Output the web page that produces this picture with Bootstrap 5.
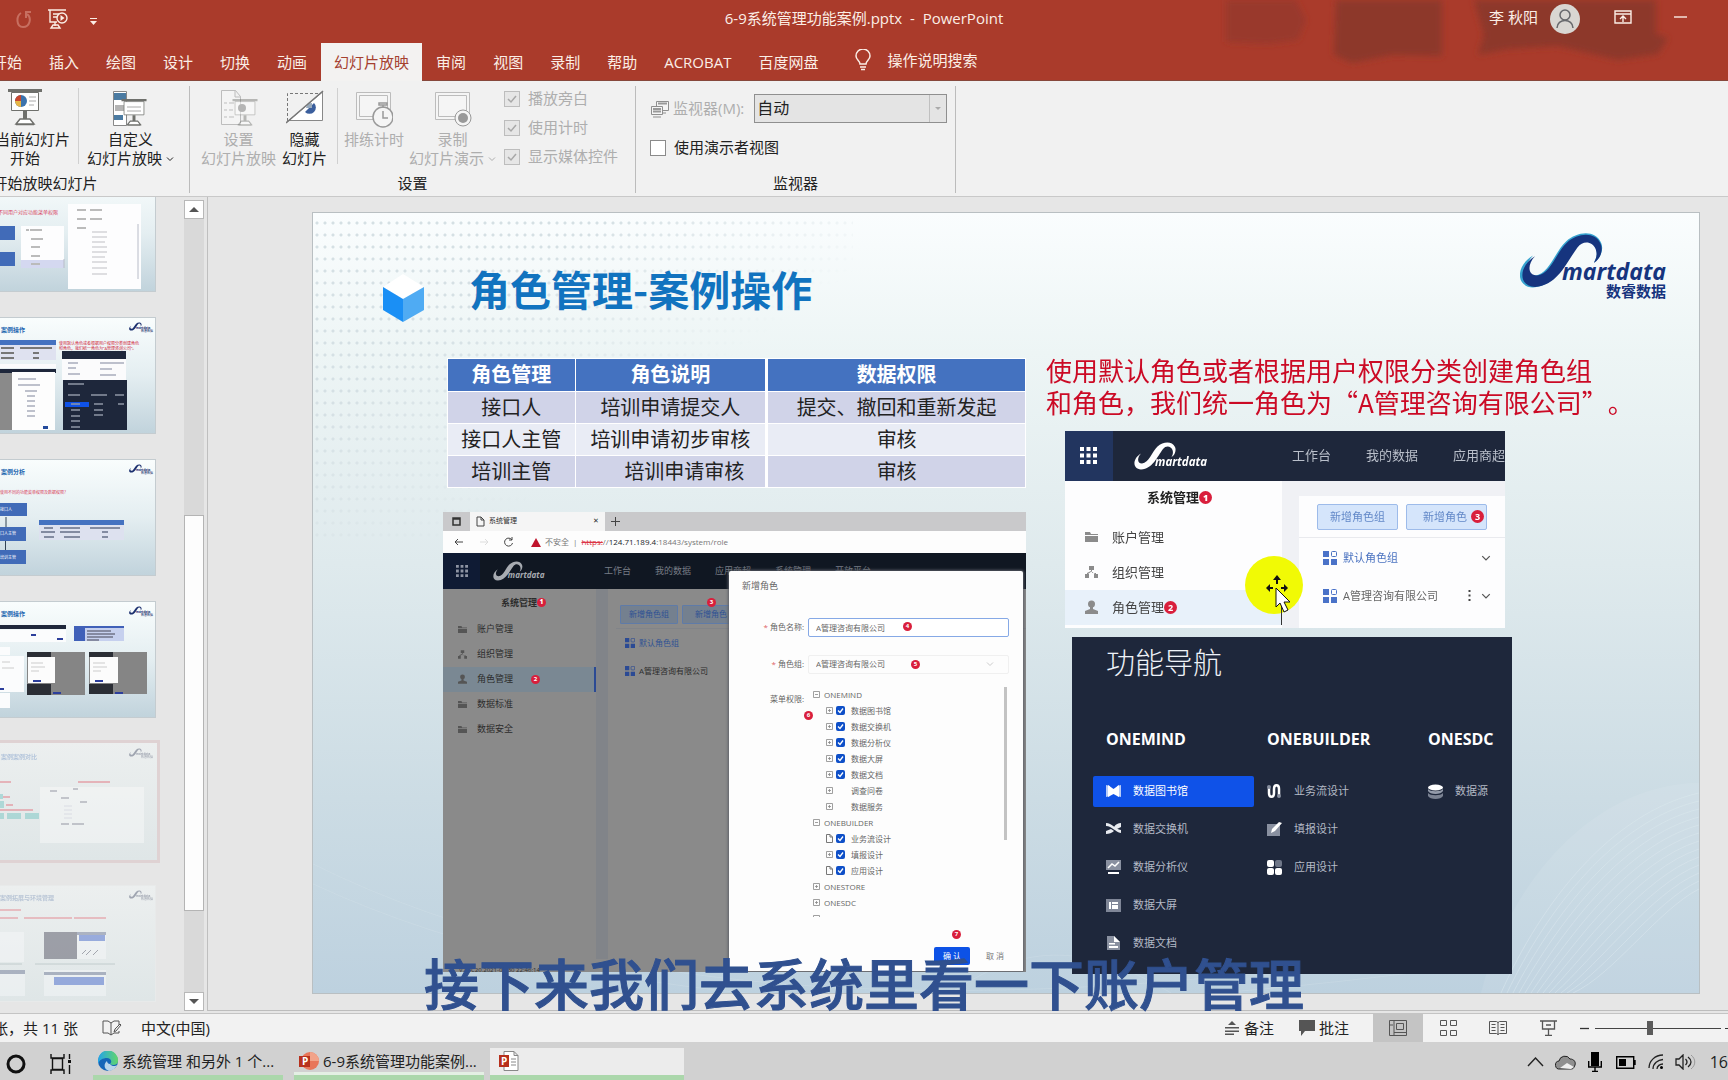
<!DOCTYPE html>
<html lang="zh-CN">
<head>
<meta charset="utf-8">
<meta name="viewport" content="width=device-width, initial-scale=1">
<title>6-9系统管理功能案例.pptx - PowerPoint</title>
<link href="https://cdn.jsdelivr.net/npm/bootstrap@5.3.0/dist/css/bootstrap.min.css" rel="stylesheet">
<style>
:root{--ui:"Open Sans","Noto Sans CJK SC",sans-serif;--red:#aa3b2b;--navy:#1e273b}
body{font-family:var(--ui);font-size:15px;line-height:20px;color:#222;background:#e6e6e6;height:100vh;overflow:hidden;position:relative}
button,input,select{font-family:inherit;font-size:inherit;line-height:inherit;color:inherit}
.plain{background:none;border:0;padding:0}
svg{display:block;flex:none}
ul{list-style:none;margin:0;padding:0}
/* title bar */
.topzone{background:var(--red);color:#fbeee6;position:relative;border-bottom:1px solid #87483c}
.smudge{right:0;top:0;z-index:0}
.titlebar{height:43px;position:relative}
.qat{width:420px}
.account{width:420px}
.tabs{margin-left:-21px;position:relative;height:37px}
.tabs .tab{padding:0 13px;margin-right:1px;height:38px;line-height:34px;white-space:nowrap}
.tabs .tab.on{background:#f3f2f1;color:#a5402f}
.tellme{margin-left:23px}
/* ribbon */
.ribbon{background:#f1f1f1;height:118px;border-bottom:1px solid #c9c9c9;line-height:19px}
.grp{margin:5px 0 3px;border-right:1px solid #bcbcbc;display:flex;flex-direction:column;justify-content:space-between;padding-top:2px}
.grp-start{width:289px;margin-left:-99px;padding-right:15px}
.grp-start .grp-name{margin-right:-15px}
.grp-set{width:446px;padding-left:11px}
.grp-mon{width:320px;padding-left:14px}
.grp-name{text-align:center;line-height:19px}
.grp-set .grp-name{margin-left:-11px}.grp-mon .grp-name{margin-left:-14px}
.rb{display:flex;flex-direction:column;align-items:center;white-space:nowrap;color:#222}
.rb svg{margin-bottom:2px}
.rb:disabled,.dim{color:#aeaeae}
.rsep{width:1px;height:76px;background:#d0d0d0}
.checks{row-gap:10px;padding-top:1px}
.mon-row{padding-top:6px}
.boxy.form-check-input[type=checkbox]{width:16px;height:16px;border:1px solid #8a8a8a;border-radius:0;margin:0;background-color:#fff;flex:none;box-shadow:none}
.boxy.form-check-input[type=checkbox]:disabled{opacity:1;border-color:#bdbdbd;background-color:#e6e6e6;background-size:14px;background-image:url("data:image/svg+xml,%3Csvg xmlns='http://www.w3.org/2000/svg' viewBox='0 0 14 14'%3E%3Cpath d='M3 7l3 3 5-6' fill='none' stroke='%23a8a8a8' stroke-width='1.5'/%3E%3C/svg%3E")}
.checks .form-check-label{opacity:1!important;color:#aeaeae}
.monsel{width:193px;height:29px;border:1px solid #8f8f8f;border-radius:0;padding:0 20px 0 2px;color:#222;line-height:25px;background-color:#e4e4e4;background-position:right 0 center;background-size:17px 27px;background-image:url("data:image/svg+xml,%3Csvg xmlns='http://www.w3.org/2000/svg' viewBox='0 0 17 27'%3E%3Cpath d='M.5 0V27' stroke='%23c0c0c0'/%3E%3Cpath d='M6 12h6l-3 3z' fill='%23aaa'/%3E%3C/svg%3E")}
.monsel:disabled{background-color:#e4e4e4}
/* work area */
.work{min-height:0}
.pane{width:184px;overflow:hidden}
.thumb{width:156px;height:117px;margin-bottom:25px;border:1px solid #c4ccd0;border-left:0;background:linear-gradient(#f9fdfd,#e4eef1 50%,#c1d3dc)}
.thumb:first-child{margin-top:-22px}
.thumb.cur{width:160px;height:123px;margin:-3px 0 22px;border:3px solid #dfd2d3;border-left:0}
.thumb.faded{background:linear-gradient(#ecefef,#dfe6e7)}
.thumb.last{border-color:#e8eaea}
.thumb.faded svg{opacity:.45}
.vbar{width:20px;background:#d9d9d9;margin-top:3px}
.vbar .cap{height:19px;background:#fff;border:1px solid #b8b8b8;display:flex;align-items:center;justify-content:center}
.vbar .thumbbar{background:#fdfdfd;border:1px solid #b4b4b4}
.stage{border-left:1px solid #bfbfbf;margin-left:3px;border-bottom:1px solid #bdbdbd;padding:15px 28px 16px 104px;min-width:0}
.slide{border:1px solid #b9bfc2;height:100%;position:relative;overflow:hidden;background:linear-gradient(#fafdfe 0,#edf5f5 18%,#dfeaed 45%,#ccdce4 75%,#bdd1df 100%)}
.dots{inset:0 auto auto 0;width:540px;height:330px;background:radial-gradient(circle,#d5e0e4 1px,transparent 2px) 0 4px/8px 12px;-webkit-mask-image:linear-gradient(145deg,#000 30%,transparent 62%);mask-image:linear-gradient(145deg,#000 30%,transparent 62%)}
.waves{right:0;bottom:0}
.s-head{height:141px;padding:20px 29px 0 70px;position:relative}
.s-title{font:700 41px/56px "Noto Sans CJK SC",sans-serif;color:#1173bf;margin:27px 0 0 45px}
.s-body{padding-left:130px;position:relative}
.colL{width:583px}
.roles{width:579px;margin:4px 0 24px 4px;font-size:20px;line-height:27px;text-align:center;border-collapse:separate;border-spacing:1px;background:#fff;color:#222}
.roles th{background:#4472c0;color:#fff;padding:2px 0 3px;font-weight:700}
.roles td{background:#d0d3e8;padding:2px 0}
.roles tr.alt td{background:#e9ecf5}
.roles .wide{border-left:2px solid #fff}
.roles .off{padding-left:28px}
.redtext{font:26px/32px "Noto Sans CJK SC",sans-serif;color:#cb0a25;margin:0;white-space:nowrap;text-spacing-trim:space-all}
/* browser shot */
.pin{display:inline-flex;align-items:center;justify-content:center;background:#d91f3c;color:#fff;border-radius:50%;width:9px;height:9px;font-size:6px;line-height:9px;flex:none}
.pin.lg{width:13px;height:13px;font-size:9px}
.bw{position:relative;background:#8a8a8a;font-size:9px;line-height:12px;color:#2c2c2c;height:460px;overflow:hidden}
.bw-tabs{height:19px;background:#c9c9cb;font-size:7px}
.bw-tab{width:135px;background:#f5f5f5;height:19px;padding:0 6px}
.bw-url{height:22px;background:#fdfdfd;font-size:8px;color:#777;padding-left:11px}
.bw-nav{height:36px;background:#101722;color:#777c85}
.bw-nav .cell{width:37px;height:36px;background:#0f1b34}
.bw-side{width:153px}
.bw-side h3{font-size:9px;line-height:12px;font-weight:700;margin:0}
.bw-side li{height:25px;padding-left:15px;gap:10px}
.bw-side li.on{background:#7a8893;border-right:2px solid #2b4a94}
.bw-gut{width:12px;background:#818489}
.bw-btn{height:19px;border:1px solid #5f7ba8;background:#74808f;color:#2f5294;font-size:8px;line-height:12px;border-radius:1px}
.dlg{position:absolute;left:286px;top:59px;width:294px;height:400px;background:#fdfdfd;border-radius:2px 2px 0 0;color:#666;font-size:8px;line-height:16px}
.dlg-edge{box-shadow:0 0 3px 1px #5c5f66}
.dlg .lab{width:75px;text-align:right;white-space:nowrap}
.dlg .lab i{color:#d66;font-style:normal}
.dlg .fld{width:201px;height:19px;border:1px solid #86a9e6;background:#fff;border-radius:2px;padding:0 7px;font-size:8px;color:#666;line-height:16px}
.dlg select.fld{appearance:none;border-color:#f0f0f0;background:#fdfdfd;opacity:1}
.tree{height:230px;overflow:hidden;width:184px}
.tree li{height:16px;display:flex;align-items:center;gap:3px}
.tree .sub{padding-left:13px;gap:2px}
.tree label{margin-left:4px}
.tree-bar{width:3px;height:153px;background:#c3c3c3}
.tick{appearance:none;width:9px;height:9px;border-radius:2px;margin:0;flex:none;background:#fdfdfd}
.tick:checked{background:#0e4fc8 url("data:image/svg+xml,%3Csvg xmlns='http://www.w3.org/2000/svg' viewBox='0 0 9 9'%3E%3Cpath d='M2 4.5l2 2 3-4' fill='none' stroke='%23fff' stroke-width='1.3'/%3E%3C/svg%3E")}
.okbtn{width:36px;height:18px;background:#0d52e6;color:#fff;border:0;border-radius:2px;font-size:8px;line-height:16px}
/* shot A */
.sa{width:440px;margin:13px 0 0 19px;background:#fdfdfe;font-size:13px;line-height:17px;color:#444;position:relative;overflow:hidden}
.sa-nav{height:50px;background:var(--navy);color:#b9bfca;white-space:nowrap}
.sa-nav .cell{width:50px;height:50px;background:#22355f}
.sa-side{width:217px;height:147px}
.sa-side h3{font-size:13px;line-height:17px;font-weight:700;color:#222;margin:8px 0 14px;padding-left:82px}
.sa-side li{height:35px;padding-left:20px;gap:14px}
.sa-side li.on{background:#e8f1fa}
.sa-main{background:#f0f1f5;padding:15px 0 0 17px;font-size:11px;line-height:16px}
.sa-panel{background:#fdfdfe;height:132px}
.sa-btn{width:81px;height:26px;border:1px solid #9dbbea;background:#d5e5fb;color:#6288c8;border-radius:2px;font-size:11px;line-height:16px}
.sa-btn.d-flex{padding-right:2px}
/* shot B */
.sb{width:440px;height:337px;margin:9px 0 0 26px;background:var(--navy);color:#b4bac6;font-size:11px;line-height:16px;padding:3px 0 0 21px;overflow:hidden}
.sb h2{font-weight:300;font-size:29px;line-height:42px;color:#eef2f8;margin:0 0 46px 13px;font-family:"Noto Sans CJK SC",sans-serif}
.sb h4{font-size:16px;line-height:22px;font-weight:700;color:#fff;margin:0 0 26px 13px}
.sb .c{width:161px;flex:none}
.sb li{height:31px;margin-bottom:7px;display:flex;align-items:center;padding-left:13px;gap:12px;border-radius:2px}
.sb li.on{background:#0f52e8;color:#fff}
/* bottom */
.status{height:29px;background:#f2f2f2;border-top:1px solid #c4c4c4;margin-top:2px}
.viewbtn{width:50px;height:28px;display:flex;align-items:center;justify-content:center}
.viewbtn.on{background:#c4c4c4}
.zoomer{appearance:none;width:126px;height:16px;background:linear-gradient(#444,#444) center/100% 1px no-repeat;margin:0}
.zoomer::-webkit-slider-thumb{appearance:none;width:6px;height:14px;background:#5c5c5c;border-radius:0}
.taskbar{height:38px;background:#d1d1d1;padding-top:6px}
.task{height:32px;width:190px;border-bottom:5px solid #abd7ab;padding:0 5px 2px;display:flex;align-items:center;gap:4px;white-space:nowrap}
.task.open{box-shadow:inset 0 -3px #e4efe4}
.task.hov{width:194px;background:#ececec;padding-left:9px}
.caption{left:0;right:0;bottom:69px;text-align:center;font:500 55px/60px "Noto Sans CJK SC",sans-serif;color:#30508f;-webkit-text-stroke:1px #30508f;pointer-events:none}
</style>
</head>
<body class="d-flex flex-column">
<svg width="0" height="0" class="position-absolute" aria-hidden="true">
<defs>
<symbol id="swoosh" viewBox="0 0 86 56"><path d="M14 23C-3 33-4 54 14 55C38 53 46 30 58 14C64 6 74 8 77 16C79 22 77 26 75 30C82 26 85 16 82 10C76-3 58-1 47 9C36 19 30 42 16 43C6 43 6 31 14 23Z"/></symbol>
<symbol id="brand" viewBox="0 0 150 56"><use href="#swoosh" width="86" height="56"/><text x="42" y="47" font-family="Open Sans" font-weight="700" font-style="italic" font-size="23">martdata</text></symbol>
<symbol id="nine" viewBox="0 0 17 17"><path d="M0 0h4v4H0zM6.500 0h4v4h-4zM13 0h4v4h-4zM0 6.500h4v4H0zM6.500 6.500h4v4h-4zM13 6.500h4v4h-4zM0 13h4v4H0zM6.500 13h4v4h-4zM13 13h4v4h-4z"/></symbol>
<symbol id="folder" viewBox="0 0 13 12"><path d="M0 1h5l1 2h7v1H0zM0 5h13v6H0z"/></symbol>
<symbol id="org" viewBox="0 0 13 12"><path d="M4 0h5v4H4zM0 8h4v4H0zM9 8h4v4H9zM6 4h1v3h4v1h-1L6.500 5.500 3 8H2V7l4-2z"/></symbol>
<symbol id="person" viewBox="0 0 13 14"><circle cx="6.500" cy="4" r="3.500"/><path d="M5 7h3v2l5 2v3H0v-3l5-2z"/></symbol>
<symbol id="tiles" viewBox="0 0 14 14"><path d="M0 0h6v6H0zM0 8h6v6H0zM8 8h6v6H8z"/><rect x="8.500" y=".5" width="5" height="5" rx="1" fill="none" stroke="currentColor"/></symbol>
<symbol id="plus" viewBox="0 0 9 9"><path d="M1.500 1.500h6v6h-6zM4.500 3v3M3 4.500h3" fill="none" stroke="#888" stroke-width=".8"/></symbol>
<symbol id="minus" viewBox="0 0 9 9"><path d="M1.500 1.500h6v6h-6zM3 4.500h3" fill="none" stroke="#888" stroke-width=".8"/></symbol>
<symbol id="page" viewBox="0 0 9 9"><path d="M1.500.5h3.500l2.500 2.500v5.500h-6zM5 .5V3h2.500" fill="none" stroke="#777"/></symbol>
<symbol id="down" viewBox="0 0 8 6"><path d="M1 1.500l3 3 3-3" fill="none" stroke="currentColor"/></symbol>
<symbol id="board" viewBox="0 0 34 38"><path d="M0 0h34v3H0zM15 22h4v8h-4z" fill="#6f706c"/><path d="M3.500 3.500h27v18h-27z" fill="#fff" stroke="#6f706c"/><path d="M12 30h10l4 5H8zM8 35.500h18" fill="#fff" stroke="#6f706c" stroke-width="1.500"/></symbol>
</defs>
</svg>

<header class="topzone">
  <svg class="smudge position-absolute" width="560" height="80" viewBox="1168 0 560 80"><defs><filter id="soft"><feGaussianBlur stdDeviation="3"/></filter></defs><g fill="#8d372b" filter="url(#soft)"><path d="M1226 0h70l10 20-8 20-30 4-42-2z" opacity=".6"/><path d="M1336 0h106v56l-50-1-40 8-18-8z"/><path d="M1474 0h182v34l12 4-10 16-40 6-60-14-50 3-30 6 6-20z"/></g></svg>
  <div class="titlebar d-flex align-items-start">
    <div class="qat d-flex align-items-center ps-3 pt-2">
      <button class="plain" aria-label="撤消"><svg width="16" height="20" viewBox="0 0 16 20"><path d="M5 4C0 7 0 18 7 18s9-9 4-13M15 3h-5v6" fill="none" stroke="#c76f60" stroke-width="2"/></svg></button>
      <button class="plain ms-3" aria-label="从头开始"><svg width="20" height="22" viewBox="0 0 20 22"><g fill="none" stroke="#fbeee6" stroke-width="1.400"><path d="M0 2h18M2 2v12h7M5 6h6M5 9h4M7 14v4M3 20h9l-2-3H5z"/><circle cx="14" cy="10" r="5"/></g><path d="M12.500 7l4 3-4 3z" fill="#fbeee6"/></svg></button>
      <button class="plain ms-3" aria-label="自定义快速访问工具栏"><svg width="20" height="20" viewBox="0 0 20 20"><path d="M6 9h7v1H6zM6 12h7l-3.500 4z" fill="#fbeee6"/></svg></button>
    </div>
    <div class="flex-grow-1 text-center pt-2" style="white-space:pre">6-9系统管理功能案例.pptx  -  PowerPoint</div>
    <div class="account d-flex align-items-center">
      <span style="margin-left:181px">李 秋阳</span>
      <svg class="mt-1" style="margin-left:12px" width="30" height="30" viewBox="0 0 30 30"><circle cx="15" cy="15" r="15" fill="#d9d6d2"/><g fill="none" stroke="#67686c" stroke-width="1.500"><circle cx="15" cy="11" r="5"/><path d="M7 24c0-10 16-10 16 0"/></g></svg>
      <button class="plain" style="margin-left:34px" aria-label="功能区显示选项"><svg width="18" height="14" viewBox="0 0 18 14"><path d="M1 1h16v12H1zM1 4h16M9 12V6M6 9l3-3 3 3" fill="none" stroke="#fbeee6" stroke-width="1.400"/></svg></button>
      <button class="plain" style="margin-left:42px" aria-label="最小化"><svg width="13" height="14" viewBox="0 0 13 14"><path d="M0 7h13" stroke="#fbeee6" stroke-width="1.400"/></svg></button>
    </div>
  </div>
  <nav class="tabs d-flex">
    <button class="plain tab">开始</button><button class="plain tab">插入</button><button class="plain tab">绘图</button><button class="plain tab">设计</button><button class="plain tab">切换</button><button class="plain tab">动画</button><button class="plain tab on">幻灯片放映</button><button class="plain tab">审阅</button><button class="plain tab">视图</button><button class="plain tab">录制</button><button class="plain tab">帮助</button><button class="plain tab">ACROBAT</button><button class="plain tab">百度网盘</button>
    <button class="plain tellme d-flex align-items-center gap-3 pb-1"><svg width="16" height="22" viewBox="0 0 16 22"><path d="M5 15c0-3-4-4-4-8a7 7 0 0114 0c0 4-4 5-4 8zM5 18h6M6 20.500h4" fill="none" stroke="#fbeee6" stroke-width="1.500"/></svg>操作说明搜索</button>
  </nav>
</header>

<section class="ribbon d-flex">
  <div class="grp grp-start">
    <div class="d-flex justify-content-end">
      <button class="plain rb"><svg width="34" height="40" viewBox="0 0 34 40"><use href="#board" y="1" width="34" height="38"/><circle cx="13" cy="13" r="6" fill="#3b73ad"/><path d="M13 13V7a6 6 0 00-6 6z" fill="#c8472e"/><path d="M7 13a6 6 0 006 6v-6z" fill="#e7b646"/><path d="M21 9h7M21 13h7M21 17h5" stroke="#aaa"/></svg><span>从当前幻灯片</span><span>开始</span></button>
      <i class="rsep ms-2 me-2"></i>
      <button class="plain rb"><svg width="36" height="40" viewBox="0 0 36 40"><path d="M1.500 3.500h13v34h-13z" fill="#fff" stroke="#888"/><path d="M2 5h12v7H2zM2 27h9v5H2z" fill="#4b7ba2"/><path d="M3 17h9v6H3z" fill="#b4b4b4"/><use href="#board" x="9" y="11" width="26" height="28"/><path d="M15 19h14M15 23h14" stroke="#aaa"/></svg><span>自定义</span><span class="d-flex align-items-center">幻灯片放映<svg class="m-0 ms-1" width="8" height="6"><use href="#down"/></svg></span></button>
    </div>
    <div class="grp-name">开始放映幻灯片</div>
  </div>
  <div class="grp grp-set">
    <div class="d-flex align-items-start">
      <button class="plain rb" disabled><svg width="38" height="40" viewBox="0 0 38 40"><path d="M1.500 2.500h14l5 6v28h-19zM15 2v7h6M4 15h3M4 22h3M4 29h3M9 15h5M9 22h4M9 29h5" fill="#f4f4f4" stroke="#bdbdbd"/><g opacity=".45"><use href="#board" x="12" y="11" width="26" height="28"/></g><circle cx="22" cy="20" r="4" fill="#b5b5b5"/></svg><span>设置</span><span>幻灯片放映</span></button>
      <button class="plain rb" style="margin-left:6px"><svg width="38" height="40" viewBox="0 0 38 40"><path d="M1.500 33V5.500h35" fill="none" stroke="#777" stroke-dasharray="3 2"/><path d="M1 34L36.500 4v28.500H2z" fill="#fff" stroke="#888"/><path d="M19 24l9-9a6 6 0 11-9 9z" fill="#3b5f9d"/><path d="M20 20a6 6 0 016-5v5z" fill="#9ab"/><path d="M0 35L37 3" stroke="#777" stroke-width="1.500"/></svg><span>隐藏</span><span>幻灯片</span></button>
      <i class="rsep" style="margin:0 6px 0 10px"></i>
      <button class="plain rb" disabled><svg width="38" height="40" viewBox="0 0 38 40"><path d="M1.500 4.500h34v27h-34zM4.500 7.500h28v21h-28z" fill="#f5f5f5" stroke="#bcbcbc"/><circle cx="28" cy="29" r="10" fill="#f5f5f5" stroke="#999" stroke-width="1.500"/><path d="M28 23v7h5M24 15h8v2h-8zM28 17v3" fill="none" stroke="#999" stroke-width="1.500"/></svg><span>排练计时</span></button>
      <button class="plain rb" style="margin-left:5px" disabled><svg width="38" height="40" viewBox="0 0 38 40"><path d="M1.500 4.500h34v27h-34zM4.500 7.500h28v21h-28z" fill="#f5f5f5" stroke="#bcbcbc"/><circle cx="29" cy="30" r="8" fill="#f5f5f5" stroke="#999"/><circle cx="29" cy="30" r="5" fill="#999"/></svg><span>录制</span><span class="d-flex align-items-center">幻灯片演示<svg class="m-0 ms-1" width="8" height="6"><use href="#down"/></svg></span></button>
      <div class="checks d-flex flex-column ms-2">
        <div class="d-flex align-items-center gap-2"><input class="form-check-input boxy" type="checkbox" id="c1" checked disabled><label class="form-check-label" for="c1">播放旁白</label></div>
        <div class="d-flex align-items-center gap-2"><input class="form-check-input boxy" type="checkbox" id="c2" checked disabled><label class="form-check-label" for="c2">使用计时</label></div>
        <div class="d-flex align-items-center gap-2"><input class="form-check-input boxy" type="checkbox" id="c3" checked disabled><label class="form-check-label" for="c3">显示媒体控件</label></div>
      </div>
    </div>
    <div class="grp-name">设置</div>
  </div>
  <div class="grp grp-mon">
    <div class="mon-row">
      <div class="d-flex align-items-center"><svg width="19" height="18" viewBox="0 0 19 18"><g fill="#f5f5f5" stroke="#8f8f8f"><path d="M6.500 1.500h12v9h-12zM9 13h7"/><path d="M1.500 6.500h11v8h-11zM3 17h8"/></g><path d="M8 3.500h9M3 9h8M3 11.500h8" stroke="#999" stroke-width="2"/></svg><label for="mon" class="dim ms-1 text-nowrap">监视器(M):</label><select id="mon" class="form-select monsel" style="margin-left:10px" disabled><option>自动</option></select></div>
      <div class="d-flex align-items-center gap-2" style="margin-top:15px"><input class="form-check-input boxy" type="checkbox" id="pv"><label for="pv">使用演示者视图</label></div>
    </div>
    <div class="grp-name">监视器</div>
  </div>
</section>

<main class="work flex-grow-1 d-flex">
  <aside class="pane">
    <div class="thumb"><svg width="155" height="115" viewBox="0 0 155 115"><text x="-2" y="38" font-size="5" fill="#d8415c">不同用户对应功能菜单权限</text><path d="M0 50h15v14H0zM0 76h15v14H0z" fill="#416bb8"/><path d="M21 50h43v42H21zM68 28h73v85H68z" fill="#fdfdfe"/><path d="M21 84h43v8H21z" fill="#d4d8f0"/><path d="M26 54h3M30 54h12M31 63h12M31 71h9M31 80h9M31 88h9M77 34h9M90 34h12M77 43h9M90 43h12M77 52h9" stroke="#bbb" stroke-width="2"/><path d="M92 56h15M92 61h15M92 66h13M92 71h15M92 76h15M92 81h13M92 86h15M92 92h15M92 98h15" stroke="#d4d4d8" stroke-width="1.500"/><path d="M138 48v55M64 83v9" stroke="#b8bcc8"/></svg></div>
    <div class="thumb"><svg width="155" height="115" viewBox="0 0 155 115"><text x="1" y="14" font-size="6" font-weight="700" fill="#1e67b0">案例操作</text><g fill="#1b2f6e"><use href="#swoosh" x="129" y="4" width="13" height="9"/><text x="136" y="11" font-size="3" font-weight="700">martdata</text><text x="141" y="14" font-size="3">数睿数据</text></g><path d="M0 22h56v5H0z" fill="#4472c0"/><path d="M0 27h56v15H0z" fill="#dfe2f0"/><path d="M1 30h13M20 30h32M1 35h13M33 35h6M1 40h13M33 40h6" stroke="#777" stroke-width="2"/><text x="59" y="27" font-size="4" fill="#d01c38">使用默认角色或者根据用户权限分类创建角色</text><text x="59" y="32" font-size="4" fill="#d01c38">和角色，我们统一角色为“A管理咨询公司”。</text><path d="M0 46h56v4H0zM62 33h64v29H62z" fill="#fbfbfc"/><path d="M0 51h56v4H0zM62 33h64v8H62z" fill="#1e273b"/><path d="M0 55h12v57H0z" fill="#8a8a8a"/><path d="M12 54h43v58H12z" fill="#fdfdfd"/><path d="M63 62h64v50H63z" fill="#1e273b"/><path d="M65 84h24v5H65z" fill="#0f52e8"/><path d="M68 66h16M68 77h12M91 77h16M115 77h9M71 86h9M71 92h9M71 98h9M71 103h9M71 109h9M94 86h9M94 92h9M94 97h9M118 86h6" stroke="#8f96a5" stroke-width="1.500"/><path d="M68 45h10M68 50h8M68 56h12M100 45h24M100 51h12M100 57h16M18 61h18M18 67h22M25 73h12M27 78h8M27 83h8M27 88h8M27 93h8M27 98h8" stroke="#a9adbc" stroke-width="1.500"/><path d="M43 108h5v3h-5z" fill="#244b9c"/></svg></div>
    <div class="thumb"><svg width="155" height="115" viewBox="0 0 155 115"><text x="1" y="14" font-size="6" font-weight="700" fill="#1e67b0">案例分析</text><g fill="#1b2f6e"><use href="#swoosh" x="129" y="4" width="13" height="9"/><text x="136" y="11" font-size="3" font-weight="700">martdata</text><text x="141" y="14" font-size="3">数睿数据</text></g><text x="0" y="34" font-size="4" fill="#d8415c">使用不同的功能菜单权限及数据权限？</text><path d="M0 43h27v13H0zM0 67h26v14H0zM0 90h26v14H0z" fill="#416bb8"/><g font-size="4" fill="#fff"><text x="0" y="51">接口人</text><text x="0" y="75">口人主管</text><text x="0" y="99">培训主管</text></g><path d="M6 57v10M5.500 81v9" stroke="#345" /><path d="M39 60h85v5H39z" fill="#4472c0"/><path d="M39 65h85v15H39z" fill="#dde1ef"/><path d="M44 68h9M60 68h20M90 68h30M41 72h14M60 72h20M102 72h6M44 77h10M64 77h16M102 77h6" stroke="#666f88" stroke-width="1.500"/></svg></div>
    <div class="thumb"><svg width="155" height="115" viewBox="0 0 155 115"><text x="1" y="14" font-size="6" font-weight="700" fill="#1e67b0">案例操作</text><g fill="#1b2f6e"><use href="#swoosh" x="129" y="4" width="13" height="9"/><text x="136" y="11" font-size="3" font-weight="700">martdata</text><text x="141" y="14" font-size="3">数睿数据</text></g><path d="M0 23h66v4H0z" fill="#1e273b"/><path d="M0 28h66v12H0zM0 45h10v8H0zM0 54h24v36H0zM0 91h10v15H0z" fill="#fbfcfd"/><path d="M74 24h50v15H74z" fill="#c6d0ee"/><path d="M74 24h50v2H74zM74 26h11v13H74z" fill="#4060b8"/><path d="M87 29h24M87 32h28M87 35h26M87 38h12" stroke="#445"/><path d="M27 50h58v43H27zM89 50h58v42H89z" fill="#858585"/><path d="M27 50h24v5H27zM27 82h24v11H27zM89 50h24v5H89zM89 82h24v10H89z" fill="#2b2e35"/><path d="M28 55h27v26H28zM90 55h28v26H90z" fill="#fcfcfc"/><path d="M31 61h12M31 65h14M31 69h8M93 61h12M93 65h14M93 69h8M2 60h8M2 66h12" stroke="#ccc"/><path d="M33 78h8v2h-8zM95 78h8v2h-8zM53 90h8v2h-8zM115 90h8v2h-8zM31 32h5v2h-5zM57 36h6v2h-6zM0 86h4v2H0z" fill="#2d3f9c"/></svg></div>
    <div class="thumb cur faded"><svg width="157" height="117" viewBox="0 -1 157 117"><text x="1" y="15" font-size="6" font-weight="700" fill="#6f92c4">案例案例对比</text><g fill="#444c66"><use href="#swoosh" x="129" y="4" width="13" height="9"/><text x="136" y="11" font-size="3" font-weight="700">martdata</text><text x="141" y="14" font-size="3">数睿数据</text></g><path d="M0 38h11M78 38h32M0 53h10M0 66h33M6 61h7" stroke="#e2707c" stroke-width="2"/><path d="M0 50h3v5H0zM0 57h4v7H0zM0 69h4v6H0zM7 69h14v6H7zM25 69h14v6H25z" fill="#6cc3c0"/><path d="M40 43h104v56H40z" fill="#fbfbfb"/><path d="M50 47h7M73 45h5M61 54h8M80 58h7M61 80h8M72 80h12" stroke="#778" stroke-width="1.500"/><path d="M64 62h8M64 66h8M64 70h8M64 74h8" stroke="#ccd"/></svg></div>
    <div class="thumb faded last"><svg width="155" height="115" viewBox="0 0 155 115"><text x="0" y="14" font-size="6" font-weight="700" fill="#7d94b8">案例拓展与环境管理</text><g fill="#444c66"><use href="#swoosh" x="129" y="4" width="13" height="9"/><text x="136" y="11" font-size="3" font-weight="700">martdata</text><text x="141" y="14" font-size="3">数睿数据</text></g><path d="M0 24h21M0 32h18M24 32h48M74 32h32" stroke="#e2606c" stroke-width="1.500"/><path d="M0 46h24v30H0zM77 46h29v27H77zM44 84h62v26H44zM0 84h25v26H0z" fill="#f8f9fb"/><path d="M44 46h33v27H44z" fill="#445"/><path d="M77 46h29v3H77zM44 86h62v3H44zM0 84h25v4H0z" fill="#667090"/><path d="M79 49h26v6H79zM54 91h50v8H54z" fill="#3b5fcc"/><path d="M0 78h22M35 78h80" stroke="#9aa" /><path d="M82 68l4-4M86 69l5-5M93 69l5-5" stroke="#556"/></svg></div>
  </aside>
  <div class="vbar d-flex flex-column">
    <div class="cap"><svg width="10" height="6" viewBox="0 0 10 6"><path d="M0 6l5-5 5 5z" fill="#555"/></svg></div>
    <div style="flex:298 0 0"></div><div class="thumbbar" style="flex:396 0 0"></div><div style="flex:82 0 0"></div>
    <div class="cap"><svg width="10" height="6" viewBox="0 0 10 6"><path d="M0 0h10L5 5z" fill="#555"/></svg></div>
  </div>
  <div class="stage flex-grow-1">
    <article class="slide">
      <div class="dots position-absolute"></div>
      <svg class="waves position-absolute" width="1388" height="240" viewBox="0 0 1388 240"><g fill="none" stroke="#dbe8ee" opacity=".5"><path d="M1190 240C1230 150 1300 60 1388 40M1196 240C1236 156 1304 68 1388 48M1202 240C1242 162 1308 76 1388 56M1208 240C1248 168 1312 84 1388 64M1214 240C1254 174 1316 92 1388 72M1220 240C1260 180 1320 100 1388 80M1226 240C1266 186 1324 108 1388 88M1232 240C1272 192 1328 116 1388 96M1238 240C1278 198 1332 124 1388 104M1244 240C1284 204 1336 132 1388 112M1250 240C1290 210 1340 140 1388 120M1256 240C1296 216 1344 148 1388 128M1262 240C1302 222 1348 156 1388 136"/><path d="M0 110C300 260 700 260 1100 200M0 130C300 270 700 270 1100 220M640 240C700 200 760 180 860 240" opacity=".5"/></g><path d="M1170 240C1200 120 1290 30 1388 30V240z" fill="#fff" opacity=".08"/></svg>
      <div class="s-head d-flex align-items-start">
        <svg style="margin-top:41px" width="41" height="48" viewBox="0 0 41 48"><path d="M20 0l21 13-21 12L0 13z" fill="#fff"/><path d="M0 13l20 12v23L0 36z" fill="#1a8ff5"/><path d="M41 13L20 25v23l21-12z" fill="#4fabf3"/></svg>
        <h1 class="s-title">角色管理-案例操作</h1>
        <svg class="ms-auto" width="150" height="68" viewBox="0 0 150 68"><g fill="#36a3cf"><use href="#swoosh" x="-1" y="-1" width="86" height="57"/></g><g fill="#16347e"><use href="#swoosh" x="1" y="1" width="84" height="54"/><text x="42" y="47" font-family="Open Sans" font-weight="700" font-style="italic" font-size="23">martdata</text><text x="86" y="64" font-family="Noto Sans CJK SC" font-weight="700" font-size="15">数睿数据</text></g></svg>
      </div>
      <div class="s-body d-flex">
        <div class="colL">
          <table class="roles">
            <colgroup><col style="width:22%"><col style="width:33%"><col></colgroup>
            <thead><tr><th>角色管理</th><th>角色说明</th><th class="wide">数据权限</th></tr></thead>
            <tbody><tr><td>接口人</td><td>培训申请提交人</td><td class="wide">提交、撤回和重新发起</td></tr><tr class="alt"><td>接口人主管</td><td>培训申请初步审核</td><td class="wide">审核</td></tr><tr><td>培训主管</td><td class="off">培训申请审核</td><td class="wide">审核</td></tr></tbody>
          </table>
          <section class="bw">
            <div class="bw-tabs d-flex align-items-center"><svg class="mx-2" width="11" height="11" viewBox="0 0 11 11"><path d="M2 2h7v7H2zM2 3h7" fill="none" stroke="#333" stroke-width="1.500"/></svg><div class="bw-tab d-flex align-items-center gap-1"><svg width="9" height="11" viewBox="0 0 9 11"><path d="M1 1h4l3 3v6H1zM5 1v3h3" fill="none" stroke="#444"/></svg><span>系统管理</span><button class="plain ms-auto" aria-label="关闭">✕</button></div><button class="plain" style="margin-left:6px" aria-label="新标签"><svg width="9" height="9" viewBox="0 0 9 9"><path d="M4.500 0v9M0 4.500h9" stroke="#444"/></svg></button></div>
            <div class="bw-url d-flex align-items-center"><svg width="91" height="12" viewBox="0 0 91 12"><g fill="none" stroke="#444"><path d="M9 6H1M4 3L1 6l3 3"/><path d="M26 6h8M31 3l3 3-3 3" stroke="#ddd"/><path d="M58 4a4 4 0 10.500 3M58 1v3h-3"/></g><path d="M82 2l5 9H77z" fill="#c0142c"/></svg><span>不安全</span><span class="mx-1">|</span><span><s class="text-danger">https:</s>//<span class="text-dark">124.71.189.4</span>:18443/system/role</span></div>
            <div class="bw-nav d-flex align-items-center text-nowrap"><div class="cell d-flex align-items-center justify-content-center"><svg width="12" height="12" fill="#8d94a3"><use href="#nine"/></svg></div><svg style="margin-left:13px" width="53" height="20" fill="#a7abb1"><use href="#brand"/></svg><span style="margin-left:58px">工作台</span><span class="ms-4">我的数据</span><span class="ms-4">应用商超</span><span class="ms-4">系统管理</span><span class="ms-4">开放平台</span></div>
            <div class="d-flex" style="height:370px">
              <div class="bw-side"><h3 class="d-flex align-items-center pt-2 pb-3"><span style="margin-left:58px">系统管理</span><b class="pin">1</b></h3>
                <ul><li class="d-flex align-items-center" style="margin-top:-8px"><svg width="9" height="9" fill="#555"><use href="#folder"/></svg>账户管理</li><li class="d-flex align-items-center"><svg width="9" height="9" fill="#555"><use href="#org"/></svg>组织管理</li><li class="d-flex align-items-center on"><svg width="9" height="10" fill="#555"><use href="#person"/></svg>角色管理<b class="pin ms-2">2</b></li><li class="d-flex align-items-center"><svg width="9" height="9" fill="#555"><use href="#folder"/></svg>数据标准</li><li class="d-flex align-items-center"><svg width="9" height="9" fill="#555"><use href="#folder"/></svg>数据安全</li></ul></div>
              <div class="bw-gut"></div>
              <div class="flex-grow-1 ps-2 pt-3"><div class="d-flex gap-1 ps-1 pb-1" style="border-bottom:1px solid #818489"><button class="bw-btn" style="width:58px">新增角色组</button><button class="bw-btn" style="width:58px">新增角色</button></div>
                <div class="d-flex align-items-center gap-1 mt-2" style="padding-left:9px;color:#2f5294;font-size:8px"><svg width="10" height="10" fill="#2b4a94" color="#2b4a94"><use href="#tiles"/></svg>默认角色组</div>
                <div class="d-flex align-items-center gap-1 mt-3" style="padding-left:9px;font-size:8px"><svg width="10" height="10" fill="#2b4a94" color="#2b4a94"><use href="#tiles"/></svg>A管理咨询有限公司</div></div>
            </div>
            <b class="pin position-absolute" style="left:264px;top:86px">3</b>
            <div class="position-absolute" style="left:16px;bottom:-4px;font-size:6px">V.83C20.2021-09-30 22:46:14</div>
            <form class="dlg dlg-edge">
              <div style="padding:7px 13px 0;font-size:9px">新增角色</div>
              <div class="d-flex align-items-center mt-4 gap-1"><label class="lab" for="rn"><i>*</i> 角色名称:</label><input id="rn" class="fld" value="A管理咨询有限公司"></div>
              <div class="d-flex align-items-center gap-1" style="margin-top:18px"><label class="lab" for="rg"><i>*</i> 角色组:</label><select id="rg" class="fld"><option>A管理咨询有限公司</option></select></div>
              <div class="d-flex gap-2" style="margin-top:13px"><span class="lab pt-1">菜单权限:</span>
                <ul class="tree">
                  <li><svg width="9" height="9"><use href="#minus"/></svg><span>ONEMIND</span></li>
                  <li class="sub"><svg width="9" height="9"><use href="#plus"/></svg><input class="tick" type="checkbox" id="t1" checked><label for="t1">数据图书馆</label></li>
                  <li class="sub"><svg width="9" height="9"><use href="#plus"/></svg><input class="tick" type="checkbox" id="t2" checked><label for="t2">数据交换机</label></li>
                  <li class="sub"><svg width="9" height="9"><use href="#plus"/></svg><input class="tick" type="checkbox" id="t3" checked><label for="t3">数据分析仪</label></li>
                  <li class="sub"><svg width="9" height="9"><use href="#plus"/></svg><input class="tick" type="checkbox" id="t4" checked><label for="t4">数据大屏</label></li>
                  <li class="sub"><svg width="9" height="9"><use href="#plus"/></svg><input class="tick" type="checkbox" id="t5" checked><label for="t5">数据文档</label></li>
                  <li class="sub"><svg width="9" height="9"><use href="#plus"/></svg><input class="tick" type="checkbox" id="t6"><label for="t6">调查问卷</label></li>
                  <li class="sub"><svg width="9" height="9"><use href="#plus"/></svg><input class="tick" type="checkbox" id="t7"><label for="t7">数据服务</label></li>
                  <li><svg width="9" height="9"><use href="#minus"/></svg><span>ONEBUILDER</span></li>
                  <li class="sub"><svg width="9" height="9"><use href="#page"/></svg><input class="tick" type="checkbox" id="t8" checked><label for="t8">业务流设计</label></li>
                  <li class="sub"><svg width="9" height="9"><use href="#plus"/></svg><input class="tick" type="checkbox" id="t9" checked><label for="t9">填报设计</label></li>
                  <li class="sub"><svg width="9" height="9"><use href="#page"/></svg><input class="tick" type="checkbox" id="t10" checked><label for="t10">应用设计</label></li>
                  <li><svg width="9" height="9"><use href="#plus"/></svg><span>ONESTORE</span></li>
                  <li><svg width="9" height="9"><use href="#plus"/></svg><span>ONESDC</span></li>
                  <li><svg width="9" height="9"><use href="#plus"/></svg><span>ABILITY</span></li>
                </ul>
                <div class="tree-bar"></div></div>
              <div class="d-flex justify-content-end align-items-center gap-3" style="margin-top:30px;padding-right:15px"><button type="button" class="okbtn">确 认</button><button type="button" class="plain me-1" style="color:#777">取 消</button></div>
              <b class="pin position-absolute" style="left:174px;top:51px">4</b><b class="pin position-absolute" style="left:182px;top:89px">5</b><b class="pin position-absolute" style="left:75px;top:140px">6</b><b class="pin position-absolute" style="left:223px;top:359px">7</b>
              <svg class="position-absolute" style="left:257px;top:90px;color:#ccc" width="8" height="6"><use href="#down"/></svg>
            </form>
          </section>
        </div>
        <div class="ms-3 ps-1">
          <p class="redtext">使用默认角色或者根据用户权限分类创建角色组<br>和角色，我们统一角色为“A管理咨询有限公司”。</p>
          <section class="sa">
            <div class="sa-nav d-flex align-items-center"><div class="cell d-flex align-items-center justify-content-center"><svg width="17" height="17" fill="#fff"><use href="#nine"/></svg></div><svg style="margin-left:21px" width="75" height="28" fill="#fff"><use href="#brand"/></svg><span style="margin-left:83px">工作台</span><span style="margin-left:35px">我的数据</span><span style="margin-left:35px">应用商超</span></div>
            <div class="d-flex">
              <div class="sa-side"><h3 class="d-flex align-items-center">系统管理<b class="pin lg">1</b></h3>
                <ul><li class="d-flex align-items-center"><svg width="13" height="12" fill="#8b8b8b"><use href="#folder"/></svg>账户管理</li><li class="d-flex align-items-center"><svg width="13" height="12" fill="#8b8b8b"><use href="#org"/></svg>组织管理</li><li class="d-flex align-items-center on"><svg width="13" height="14" fill="#8b8b8b"><use href="#person"/></svg><span class="d-flex align-items-center">角色管理<b class="pin lg">2</b></span></li></ul></div>
              <div class="sa-main flex-grow-1"><div class="sa-panel">
                <div class="d-flex gap-2 pt-2" style="padding:0 18px 7px;border-bottom:1px solid #e9eaee"><button class="sa-btn">新增角色组</button><button class="sa-btn d-flex align-items-center justify-content-end gap-1">新增角色<b class="pin lg">3</b></button></div>
                <div class="d-flex align-items-center mt-2 pt-1" style="padding:0 14px 0 24px;gap:6px;color:#4a72c0"><svg width="14" height="14" fill="#4a72c8"><use href="#tiles"/></svg>默认角色组<svg class="ms-auto" style="color:#555" width="10" height="8"><use href="#down"/></svg></div>
                <div class="d-flex align-items-center" style="margin-top:22px;padding:0 14px 0 24px;gap:6px;color:#666"><svg width="14" height="14" fill="#4a72c8" color="#4a72c8"><use href="#tiles"/></svg>A管理咨询有限公司<svg class="ms-auto" width="3" height="11" viewBox="0 0 3 11"><path d="M.5 0h2v2h-2zM.5 4.500h2v2h-2zM.5 9h2v2h-2z" fill="#444"/></svg><svg class="ms-1" style="color:#555" width="10" height="8"><use href="#down"/></svg></div>
              </div></div>
            </div>
            <svg class="position-absolute" style="right:201px;bottom:0" width="62" height="74" viewBox="0 0 62 74"><ellipse cx="32" cy="31" rx="29" ry="29" fill="#f1fa05"/><path d="M39.500 48v23" stroke="#333"/><g fill="#111"><path d="M34 25h2v5h-2zM27 33h4v2h-4zM39 33h4v2h-4zM34 39h2v5h-2z"/><path d="M35 21l4 5h-8zM24 34l4-4v8zM46 34l-4-4v8z"/></g><path d="M34 34v19l4-4 4 9 4-2-4-8h6z" fill="#fff" stroke="#111"/></svg>
          </section>
          <section class="sb">
            <h2>功能导航</h2>
            <div class="d-flex">
              <div class="c"><h4>ONEMIND</h4><ul>
                <li class="on"><svg width="15" height="14" viewBox="0 0 15 14"><path d="M0 1l4 1v10l-4 1zM15 1l-4 1v10l4 1z" fill="#b9cdf8"/><path d="M2 1l5.500 4L13 1v12l-5.500-3L2 13z" fill="#fff"/></svg>数据图书馆</li>
                <li><svg width="15" height="12" viewBox="0 0 15 12"><path d="M0 0c6 0 9 6 15 7v3C9 9 6 3 0 3zM0 11V8l5-2 3 2c-2 2-5 3-8 3zM8 4c2-3 4-4 7-4v4l-4 2z" fill="#e8ebf0"/></svg>数据交换机</li>
                <li><svg width="15" height="14" viewBox="0 0 15 14"><path d="M0 0h15v10H0z" fill="#8990a0"/><path d="M2 12h11v2H2z" fill="#fff"/><path d="M2 8l4-4 3 2 4-4" fill="none" stroke="#fff" stroke-width="1.500"/></svg>数据分析仪</li>
                <li><svg width="15" height="13" viewBox="0 0 15 13"><path d="M0 0h15v13H0z" fill="#7f8697"/><path d="M3 3h2v7H3zM6 3h6v2H6zM6 6h6v4H6z" fill="#fff"/></svg>数据大屏</li>
                <li><svg width="15" height="14" viewBox="0 0 15 14"><path d="M1 0h7l6 6v8H1z" fill="#8990a0"/><path d="M8 0l6 6H8zM3 7h6v1.500H3zM3 10h9v2H3z" fill="#fff"/></svg>数据文档</li></ul></div>
              <div class="c"><h4>ONEBUILDER</h4><ul>
                <li><svg width="15" height="14" viewBox="0 0 15 14"><path d="M2 4v5c0 5 5 5 5 0V5c0-5 5-5 5 0v6" fill="none" stroke="#fff" stroke-width="2.500"/><circle cx="2" cy="3" r="2" fill="#8990a0"/><circle cx="12" cy="12" r="2" fill="#8990a0"/></svg>业务流设计</li>
                <li><svg width="15" height="14" viewBox="0 0 15 14"><path d="M0 2h13v12H0z" fill="#8990a0"/><path d="M4 11l1-4 7-7 3 1-7 8z" fill="#fff"/></svg>填报设计</li>
                <li><svg width="15" height="15" viewBox="0 0 15 15"><g fill="#fff"><rect width="7" height="7" rx="2"/><rect y="8" width="7" height="7" rx="2"/><rect x="8" y="8" width="7" height="7" rx="2"/></g><rect x="8" width="7" height="7" rx="2" fill="#6f7788"/></svg>应用设计</li></ul></div>
              <div class="c"><h4>ONESDC</h4><ul>
                <li><svg width="15" height="15" viewBox="0 0 15 15"><path d="M0 9c2 3 13 3 15 0v3c-2 4-13 4-15 0z" fill="#7b8292"/><path d="M0 5c2 3 13 3 15 0v2c-2 4-13 4-15 0z" fill="#959cab"/><ellipse cx="7.500" cy="3.500" rx="7.500" ry="3" fill="#fff"/></svg>数据源</li></ul></div>
            </div>
          </section>
        </div>
      </div>
    </article>
  </div>
</main>

<footer>
  <div class="status d-flex align-items-center">
    <span style="margin-left:-7px" class="text-nowrap">张，共 11 张</span>
    <svg style="margin-left:24px" width="20" height="16" viewBox="0 0 20 16"><path d="M1 1h5l3 2v12l-3-2H1zM9 3l3-2h5v4M17 11v2h-5l-3 2M12 12l1-3 5-5 1 1-5 6z" fill="none" stroke="#555"/></svg>
    <span style="margin-left:19px">中文(中国)</span>
    <button class="plain ms-auto d-flex align-items-center"><svg width="14" height="14" viewBox="0 0 14 14"><path d="M7 0l4 4H3zM0 6h14v1.500H0zM0 9.500h14V11H0zM0 12.500h9V14H0z" fill="#555"/></svg><span style="margin-left:5px">备注</span></button>
    <button class="plain d-flex align-items-center" style="margin:0 24px"><svg width="18" height="16" viewBox="0 0 18 16"><path d="M1 0h16v11H7l-4 5v-5H1z" fill="#555"/></svg><span style="margin-left:3px">批注</span></button>
    <button class="plain viewbtn on" aria-label="普通视图"><svg width="18" height="16" viewBox="0 0 18 16"><path d="M.5.500h17v15H.500zM5 .5v15M7.500 3.500h7v6h-7zM5 12.500h12M1 5h3" fill="none" stroke="#555"/></svg></button>
    <button class="plain viewbtn" aria-label="幻灯片浏览"><svg width="17" height="16" viewBox="0 0 17 16"><path d="M.5.500h6v5h-6zM10.500.500h6v5h-6zM.5 10.500h6v5h-6zM10.500 10.500h6v5h-6z" fill="none" stroke="#555"/></svg></button>
    <button class="plain viewbtn" aria-label="阅读视图"><svg width="18" height="16" viewBox="0 0 18 16"><path d="M.5 1.500h7l1.500 1 1.500-1h7v12h-7l-1.500 1-1.500-1h-7zM9 2v13M2.500 4.500h4M2.500 7.500h4M2.500 10.500h4M11.500 4.500h4M11.500 7.500h4M11.500 10.500h4" fill="none" stroke="#555"/></svg></button>
    <button class="plain viewbtn" aria-label="幻灯片放映"><svg width="17" height="16" viewBox="0 0 17 16"><path d="M0 1h17M2.500 1v8h12V1M8.500 9v6M5 15.500h7M6 5h5" fill="none" stroke="#555" stroke-width="1.300"/></svg></button>
    <svg style="margin-left:7px" width="9" height="9"><path d="M0 4.500h9" stroke="#333" stroke-width="1.300"/></svg>
    <input class="zoomer" style="margin-left:6px" type="range" aria-label="缩放" min="0" max="100" value="43">
    <svg class="ms-1" width="3" height="9"><path d="M0 4.500h3" stroke="#333"/></svg>
  </div>
  <div class="taskbar d-flex align-items-center">
    <button class="plain" style="margin-left:6px" aria-label="Cortana"><svg width="20" height="20" viewBox="0 0 20 20"><circle cx="10" cy="10" r="8" fill="none" stroke="#111" stroke-width="3"/></svg></button>
    <button class="plain" style="margin:0 21px 0 24px" aria-label="任务视图"><svg width="22" height="20" viewBox="0 0 22 20"><path d="M1 0v4h13V0M1 20v-4h13v4M2.500 4.500h10v11h-10zM19.500 0v5M19.500 11v9" fill="none" stroke="#111" stroke-width="1.400"/><path d="M18 6h3v3h-3z" fill="#111"/></svg></button>
    <button class="plain task"><svg width="20" height="20" viewBox="0 0 20 20"><defs><linearGradient id="eg" x1="0" y1="0" x2="1" y2="0"><stop offset="0" stop-color="#23a4e8"/><stop offset="1" stop-color="#62d66b"/></linearGradient></defs><circle cx="10" cy="10" r="10" fill="#1565b8"/><path d="M0 9a10 10 0 0120 1c0 4-5 5-8 3 3-3 0-6-3-6-4 0-8 2-9 6z" fill="url(#eg)"/><path d="M12 13c2 3 6 2 7 1a10 10 0 01-8 6c-6-2-5-8-2-10 0 1 1 3 3 3z" fill="#d5e7f3" opacity=".85"/></svg>系统管理 和另外 1 个...</button>
    <button class="plain task open" style="margin-left:11px"><svg width="20" height="20" viewBox="0 0 20 20"><circle cx="11" cy="10" r="9" fill="#e8765a"/><path d="M11 1a9 9 0 019 9h-9z" fill="#f2a389"/><path d="M0 5h11v11H0z" fill="#b7301c"/><text x="3" y="14" font-size="10" font-weight="700" fill="#fff">P</text></svg>6-9系统管理功能案例...</button>
    <button class="plain task hov" style="margin-left:6px" aria-label="PowerPoint"><svg width="20" height="20" viewBox="0 0 20 20"><path d="M5 .5h10l4 4v15H5zM15 .5v4h4M12 8h5M12 11h5M12 14h5" fill="#fff" stroke="#888"/><path d="M0 4h10v12H0z" fill="#b7301c"/><text x="2" y="14" font-size="10" font-weight="700" fill="#fff">P</text></svg></button>
    <div class="ms-auto d-flex align-items-center pb-1">
      <svg width="17" height="10" viewBox="0 0 17 10"><path d="M1 9l7.500-8L16 9" fill="none" stroke="#222" stroke-width="1.400"/></svg>
      <svg style="margin-left:11px" width="21" height="15" viewBox="0 0 21 15"><path d="M5 14a4 4 0 01-1-8 6 6 0 0111-2c4 0 6 3 5 6s-2 4-4 4z" fill="#8f8f8f" stroke="#222"/><path d="M5 13l7-5 7 4-3 2z" fill="#eee"/></svg>
      <svg style="margin-left:12px" width="14" height="20" viewBox="0 0 14 20"><rect x="3" width="8" height="14" fill="#000"/><path d="M.7 9v6h12.600V9M7 15v4M4 19.500h6" fill="none" stroke="#000" stroke-width="1.400"/></svg>
      <svg style="margin-left:14px" width="20" height="13" viewBox="0 0 20 13"><path d="M.7.700h17v11.500h-17zM19 4v5" fill="none" stroke="#000" stroke-width="1.400"/><path d="M3 3h7v7H3z"/></svg>
      <svg style="margin-left:12px" width="17" height="16" viewBox="0 0 17 16"><path d="M1 14C1 7 7 1 15 1M5 15c0-6 5-9 10-9.500M9 15c0-3 3-5 6-5" fill="none" stroke="#222" stroke-width="1.300"/><circle cx="13.500" cy="13.500" r="1.500"/></svg>
      <svg style="margin-left:10px" width="21" height="16" viewBox="0 0 21 16"><path d="M1 5h3l4-4v14l-4-4H1zM10.500 5c2 2 2 4 0 6M13 3c4 3 4 7 0 10" fill="none" stroke="#222" stroke-width="1.300"/><path d="M16 1c5 4 5 10 0 14" fill="none" stroke="#999"/></svg>
      <span style="margin-left:14px;font-size:16px">16</span>
    </div>
  </div>
</footer>
<div class="caption position-absolute">接下来我们去系统里看一下账户管理</div>
<script src="https://cdn.jsdelivr.net/npm/bootstrap@5.3.0/dist/js/bootstrap.bundle.min.js"></script>
</body>
</html>
